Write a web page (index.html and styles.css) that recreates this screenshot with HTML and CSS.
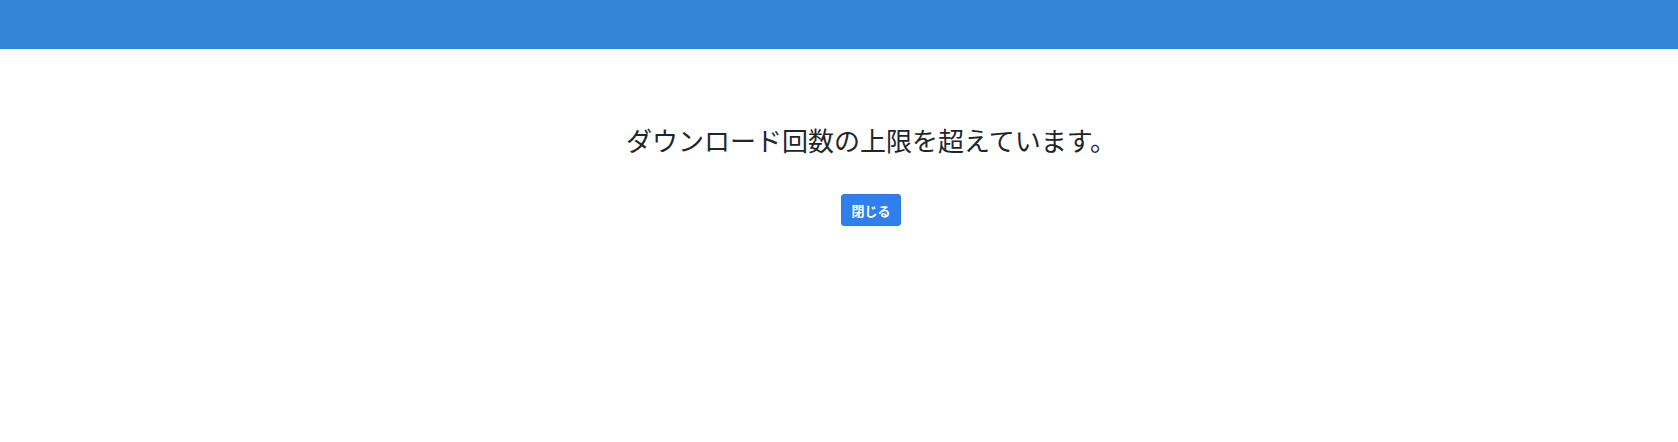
FILE: index.html
```html
<!DOCTYPE html>
<html lang="ja">
<head>
<meta charset="utf-8">
<title>ダウンロード</title>
<link rel="stylesheet" href="styles.css">
</head>
<body>
<header class="topbar"></header>
<main class="content">
  <h1 class="message">ダウンロード回数の上限を超えています。</h1>
  <button class="btn-close" type="button">閉じる</button>
</main>
</body>
</html>
```
FILE: styles.css
```css
html, body {
  margin: 0;
  padding: 0;
  background: #ffffff;
  font-family: "Noto Sans CJK JP", "Noto Sans", sans-serif;
  color: #212529;
}
.topbar {
  height: 49px;
  background: #3384d9;
}
.content {
  display: flex;
  flex-direction: column;
  align-items: center;
  padding-top: 75px;
  padding-left: 64px;
}
.message {
  margin: 0;
  font-size: 26px;
  font-weight: 400;
  line-height: 32px;
  color: #212529;
}
.btn-close {
  margin-top: 38px;
  width: 60px;
  height: 32px;
  padding: 0;
  border: 1px solid #2c7be5;
  border-radius: 3px;
  background: #2f80ed;
  color: #ffffff;
  font-family: "Noto Sans CJK JP", sans-serif;
  font-size: 13px;
  font-weight: 700;
  cursor: pointer;
}
```
